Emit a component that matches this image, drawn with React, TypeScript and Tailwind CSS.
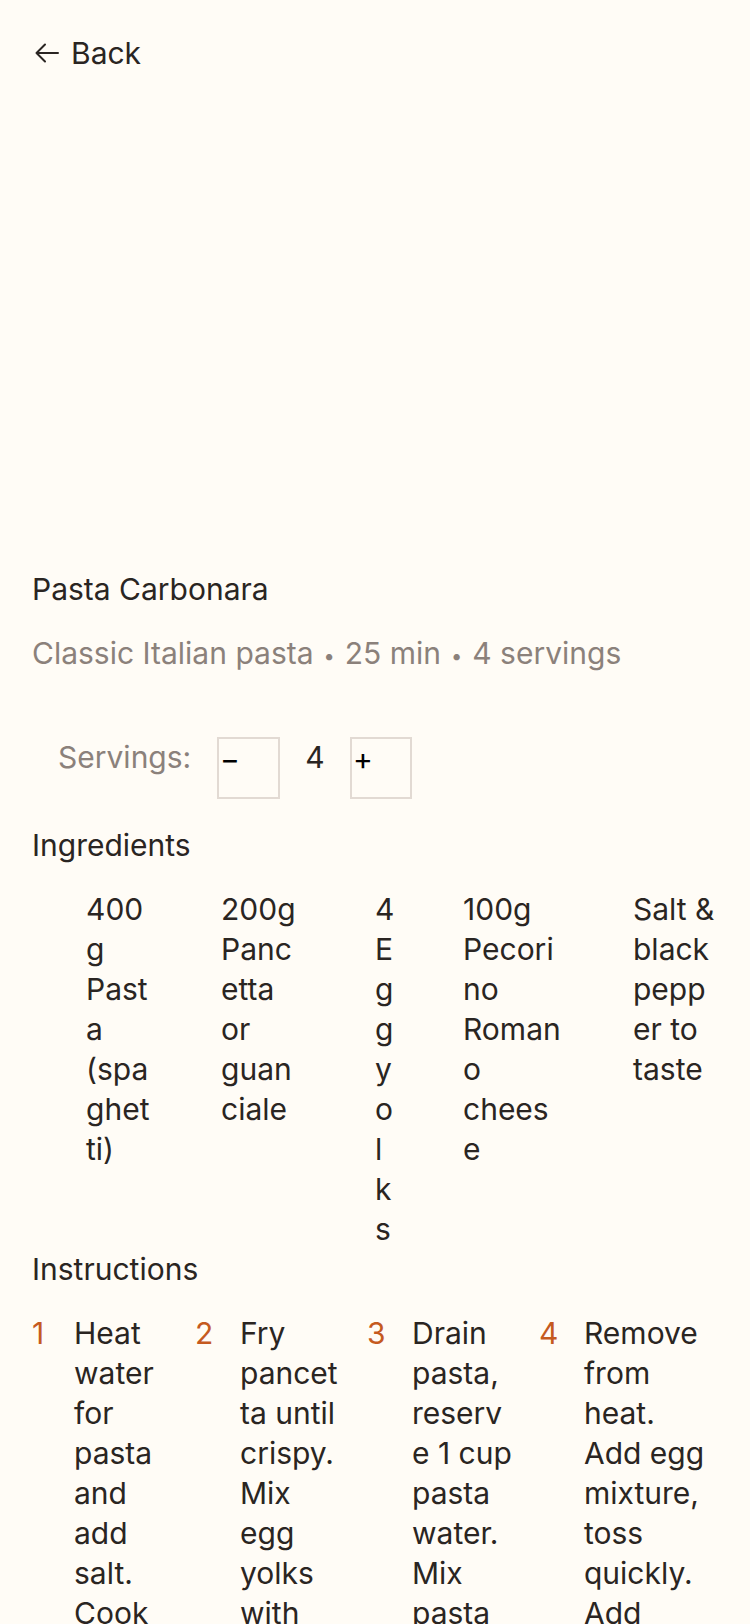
import React from "react";

const ingredients = [
  { text: "400g Pasta (spaghetti)", w: "w-[68px] mr-[67px]" },
  { text: "200g Pancetta or guanciale", w: "w-[80px] mr-[74px]" },
  { text: "4 Egg yolks", w: "w-[21px] mr-[67px]" },
  { text: "100g Pecorino Romano cheese", w: "w-[101px] mr-[69px]" },
  { text: "Salt & black pepper to taste", w: "w-[85px]" },
];

const steps = [
  {
    n: 1,
    box: "w-[163px]",
    num: "w-[42px]",
    text: "w-[92px]",
    body: "Heat water for pasta and add salt. Cook pasta until al dente.",
  },
  {
    n: 2,
    box: "w-[172px]",
    num: "w-[45px]",
    text: "w-[104px]",
    body: "Fry pancetta until crispy. Mix egg yolks with grated cheese and pepper.",
  },
  {
    n: 3,
    box: "w-[172px]",
    num: "w-[45px]",
    text: "w-[106px]",
    body: "Drain pasta, reserve 1 cup pasta water. Mix pasta with pancetta.",
  },
  {
    n: 4,
    box: "w-[170px]",
    num: "w-[45px]",
    text: "w-[125px]",
    body: "Remove from heat. Add egg mixture, toss quickly. Add pasta water as needed.",
  },
];

function Dot() {
  return <span className="mx-[10px] inline-block align-middle text-[20px] leading-[20px]">•</span>;
}

export default function App() {
  return (
    <div className="min-h-screen w-[750px] h-[1624px] overflow-hidden bg-[#fffcf6] px-8 pt-[33px] text-[30px] leading-[40px] text-[#2a2522] font-['Inter','Liberation_Sans',sans-serif]">
      <button className="flex items-center gap-3 h-10 text-[#2a2522]">
        <svg width="24" height="20" viewBox="0 0 24 20" fill="none" className="ml-[3px]">
          <path
            d="M23 10H1.5M10 1.5L1.5 10L10 18.5"
            stroke="#2a2522"
            strokeWidth="2"
            strokeLinecap="round"
            strokeLinejoin="round"
          />
        </svg>
        <span>Back</span>
      </button>

      {/* image area, nothing loaded */}
      <div className="h-[496px]" />

      <h1 className="text-[30px] leading-[40px] font-normal">Pasta Carbonara</h1>
      <p className="mt-[24px] text-[#8b817b]">
        Classic Italian pasta
        <Dot />
        25 min
        <Dot />4 servings
      </p>

      <div className="mt-[64px] flex items-start pl-[26px]">
        <span className="w-[159px] text-[#8b817b]">Servings:</span>
        <button className="flex h-[62px] w-[63px] items-start border-2 border-[#e2dad3] pl-px text-black">
          −
        </button>
        <span className="w-[70px] text-center">4</span>
        <button className="flex h-[62px] w-[62px] items-start border-2 border-[#e2dad3] pl-px text-black">
          +
        </button>
      </div>

      <h2 className="mt-[26px] font-normal">Ingredients</h2>
      <ul className="mt-[24px] flex items-start pl-[54px]">
        {ingredients.map((it) => (
          <li key={it.text} className={`${it.w} shrink-0 break-words`}>
            {it.text}
          </li>
        ))}
      </ul>

      <h2 className="font-normal">Instructions</h2>
      <ol className="mt-[24px] flex items-start">
        {steps.map((s) => (
          <li key={s.n} className={`${s.box} flex shrink-0`}>
            <span className={`${s.num} shrink-0 text-[#c55a1f]`}>{s.n}</span>
            <span className={`${s.text} shrink-0 break-words`}>{s.body}</span>
          </li>
        ))}
      </ol>
    </div>
  );
}
